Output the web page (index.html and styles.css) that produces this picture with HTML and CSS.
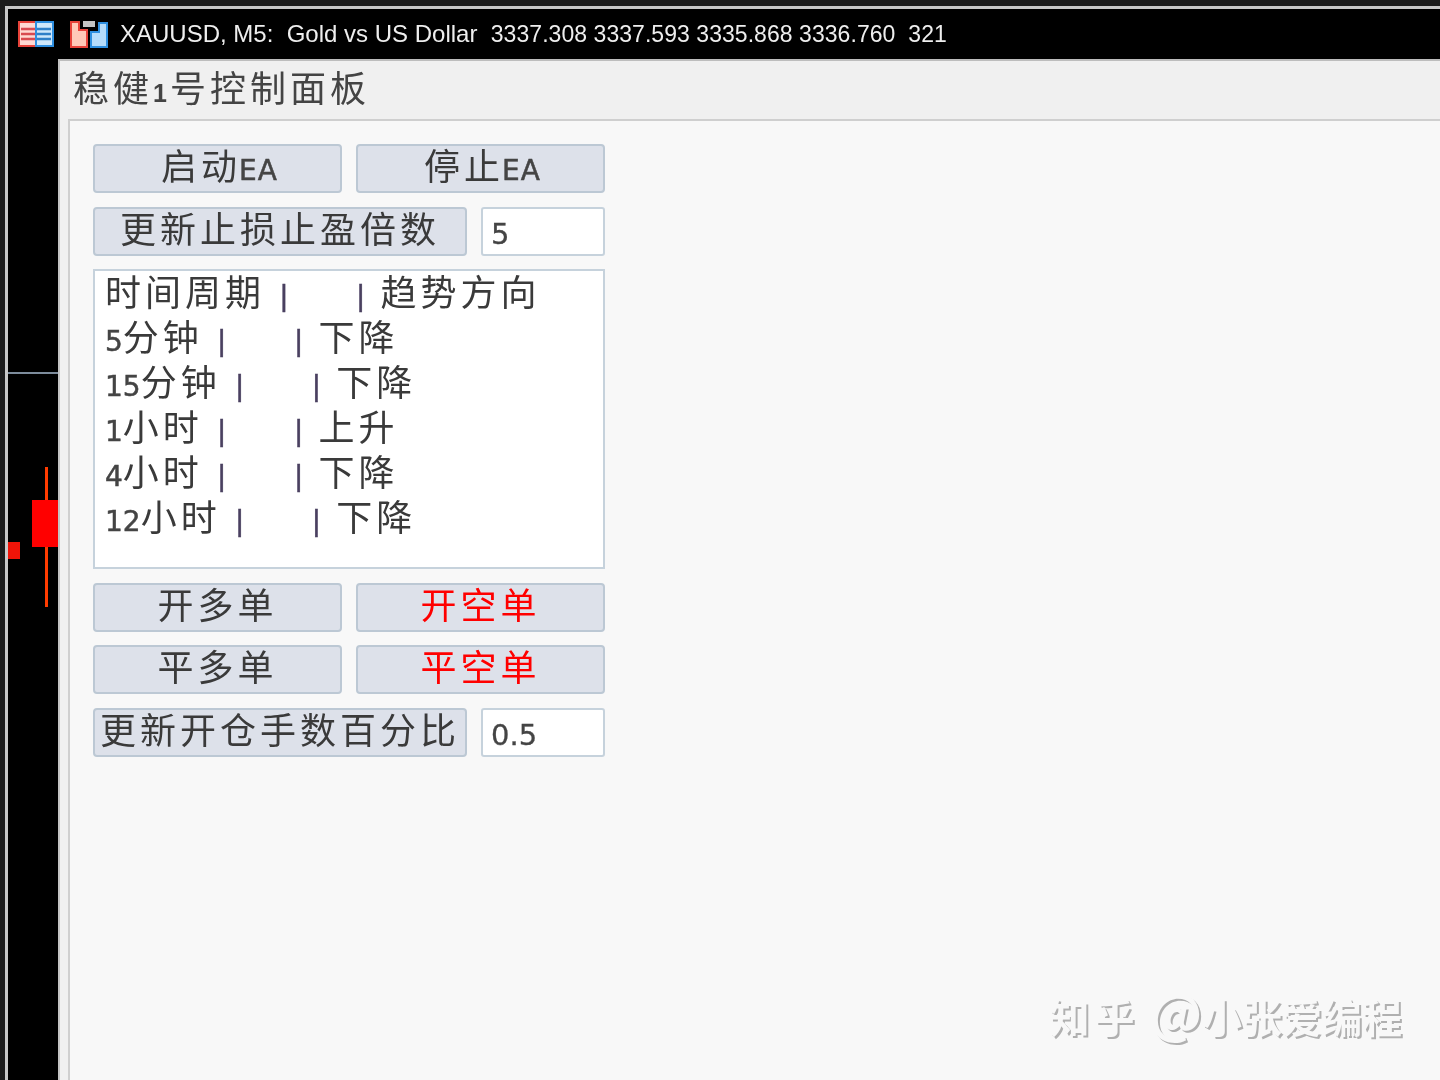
FILE: index.html
```html
<!DOCTYPE html>
<html lang="zh-CN">
<head>
    <meta charset="UTF-8">
    <title>稳健1号控制面板</title>
    <link rel="stylesheet" href="styles.css">
</head>
<body>
    <div class="terminal">
        <div class="chart">
            <!-- price line and candles behind the panel -->
            <div class="price-line"></div>
            <div class="wick"></div>
            <div class="candle"></div>
            <div class="candle-small"></div>

            <div class="chart-title">
                <svg class="icon-table" width="36" height="26" viewBox="0 0 36 26">
                    <rect x="1" y="1" width="17" height="24" fill="#ffd9d2" stroke="#e8433a" stroke-width="2"/>
                    <rect x="18" y="1" width="17" height="24" fill="#cfe8fb" stroke="#2e8fe0" stroke-width="2"/>
                    <path d="M3 8h14M3 13h14M3 18h14" stroke="#d84a50" stroke-width="2.5"/>
                    <path d="M19 8h14M19 13h14M19 18h14" stroke="#2f80c8" stroke-width="2.5"/>
                </svg>
                <svg class="icon-chart" width="38" height="28" viewBox="0 0 38 28">
                    <path d="M1 2h8v8h8v17H1z" fill="#ffc9b8" stroke="#e8433a" stroke-width="2"/>
                    <path d="M37 3h-8v9h-8v15h16z" fill="#b5dcfb" stroke="#2e8fe0" stroke-width="2"/>
                    <rect x="13" y="1" width="12" height="6" fill="#c4c4c4"/>
                </svg>
                <span class="chart-info">XAUUSD, M5:  Gold vs US Dollar  <span class="quotes">3337.308 3337.593 3335.868 3336.760  321</span></span>
            </div>

            <div class="panel">
                <div class="panel-title">稳健<span class="num-bold">1</span>号控制面板</div>
                <div class="panel-body">
                    <div class="form">
                        <div class="row">
                            <div class="btn">启动<span class="latin">EA</span></div>
                            <div class="btn">停止<span class="latin">EA</span></div>
                        </div>
                        <div class="row">
                            <div class="btn btn-wide">更新止损止盈倍数</div>
                            <div class="field">5</div>
                        </div>
                        <div class="trend-list">
                            <div class="trend-row">时间周期<span class="sep">|</span><span class="sep sep-last">|</span>趋势方向</div>
                            <div class="trend-row"><span class="latin">5</span>分钟<span class="sep">|</span><span class="sep sep-last">|</span>下降</div>
                            <div class="trend-row"><span class="latin">15</span>分钟<span class="sep">|</span><span class="sep sep-last">|</span>下降</div>
                            <div class="trend-row"><span class="latin">1</span>小时<span class="sep">|</span><span class="sep sep-last">|</span>上升</div>
                            <div class="trend-row"><span class="latin">4</span>小时<span class="sep">|</span><span class="sep sep-last">|</span>下降</div>
                            <div class="trend-row"><span class="latin">12</span>小时<span class="sep">|</span><span class="sep sep-last">|</span>下降</div>
                        </div>
                        <div class="row">
                            <div class="btn">开多单</div>
                            <div class="btn btn-red">开空单</div>
                        </div>
                        <div class="row">
                            <div class="btn">平多单</div>
                            <div class="btn btn-red">平空单</div>
                        </div>
                        <div class="row">
                            <div class="btn btn-wide">更新开仓手数百分比</div>
                            <div class="field">0.5</div>
                        </div>
                    </div>
                </div>
            </div>
        </div>
        <div class="watermark"><span class="watermark-site">知乎</span> <span class="watermark-at">@</span>小张爱编程</div>
    </div>
</body>
</html>
```

FILE: styles.css
```css
body {
    margin: 0;
    background: #1c1c1c;
    font-family: "Noto Sans CJK SC", "Noto Sans", sans-serif;
    color: #3a3a3a;
}

.terminal {
    position: relative;
    height: 1080px;
    overflow: hidden;
    padding: 6px 0 0 5px;
    box-sizing: border-box;
    filter: blur(0.5px);
}

.chart {
    position: relative;
    display: flex;
    flex-direction: column;
    height: 100%;
    background: #000;
    border-top: 3px solid #c8c8c8;
    border-left: 3px solid #c8c8c8;
}

.price-line {
    position: absolute;
    left: 0;
    top: 363px;
    width: 50px;
    height: 2px;
    background: #7d8c9c;
}

.wick {
    position: absolute;
    left: 37px;
    top: 458px;
    width: 3px;
    height: 140px;
    background: #ff3c00;
}

.candle {
    position: absolute;
    left: 24px;
    top: 491px;
    width: 26px;
    height: 47px;
    background: #ff0000;
}

.candle-small {
    position: absolute;
    left: 0;
    top: 533px;
    width: 12px;
    height: 17px;
    background: #f01408;
}

.chart-title {
    display: flex;
    align-items: center;
    height: 50px;
    flex: none;
    padding-left: 10px;
    box-sizing: border-box;
}

.icon-table {
    margin-right: 16px;
}

.icon-chart {
    margin-right: 12px;
}

.chart-info {
    font-family: "Liberation Sans", sans-serif;
    font-size: 24px;
    color: #eee;
    white-space: pre;
}

.quotes {
    font-size: 23px;
    letter-spacing: 0.05px;
}

.panel {
    position: relative;
    flex: 1;
    display: flex;
    flex-direction: column;
    margin-left: 50px;
    background: #f0f0f0;
    border-top: 2px solid #bdbdbd;
    border-left: 2px solid #c4c4c4;
    padding-left: 8px;
}

.panel-title {
    height: 58px;
    line-height: 50px;
    flex: none;
    padding-left: 5px;
    font-size: 36px;
    letter-spacing: 4px;
    color: #444;
}

.num-bold {
    font-family: "Liberation Sans", sans-serif;
    font-size: 25px;
    font-weight: bold;
    letter-spacing: 3px;
}

.panel-body {
    flex: 1;
    background: #f8f8f8;
    border-top: 2px solid #cfcfcf;
    border-left: 2px solid #cfcfcf;
    padding: 23px;
}

.form {
    display: flex;
    flex-direction: column;
    gap: 13.5px;
    width: 512px;
}

.row {
    display: flex;
    gap: 14px;
}

.btn {
    flex: 1;
    height: 49px;
    line-height: 36px;
    box-sizing: border-box;
    text-align: center;
    background: #dde1ea;
    border: 2px solid #bcc8d4;
    border-radius: 4px;
    font-size: 36px;
    letter-spacing: 4px;
    white-space: nowrap;
}

.btn-wide {
    flex: none;
    width: 374px;
}

.btn-red {
    color: #ff0000;
}

.latin {
    font-family: "DejaVu Sans", sans-serif;
    font-size: 28px;
    letter-spacing: 0;
    color: #444;
    -webkit-text-stroke: 0.5px #444;
}

.btn .latin {
    letter-spacing: 1px;
    margin-left: -2px;
    margin-right: -4px;
}

.field {
    flex: 1;
    height: 49px;
    line-height: 51px;
    box-sizing: border-box;
    padding-left: 8px;
    background: #fff;
    border: 2px solid #c6d2dc;
    border-radius: 3px;
    font-family: "DejaVu Sans", sans-serif;
    font-size: 29px;
    color: #444;
    -webkit-text-stroke: 0.3px #444;
}

.trend-list {
    height: 300px;
    box-sizing: border-box;
    padding: 0 10px;
    background: #fff;
    border: 2px solid #c6d2dc;
}

.trend-row {
    height: 45px;
    line-height: 39px;
    font-size: 36px;
    letter-spacing: 4px;
    white-space: nowrap;
}

.sep {
    font-family: "Liberation Sans", sans-serif;
    font-size: 30px;
    letter-spacing: 0;
    margin-left: 15px;
    color: #4a4060;
    -webkit-text-stroke: 0.4px #4a4060;
}

.sep-last {
    margin-left: 69px;
    margin-right: 16px;
}

.watermark {
    position: absolute;
    right: 38px;
    top: 986px;
    line-height: 60px;
    font-size: 40px;
    font-weight: bold;
    color: #f8f8f8;
    text-shadow: 2px 2px 0 #b0b0b0;
    white-space: nowrap;
}

.watermark-site {
    letter-spacing: 5px;
    margin-right: 1px;
}

.watermark-at {
    font-size: 52px;
    line-height: 40px;
}
```
